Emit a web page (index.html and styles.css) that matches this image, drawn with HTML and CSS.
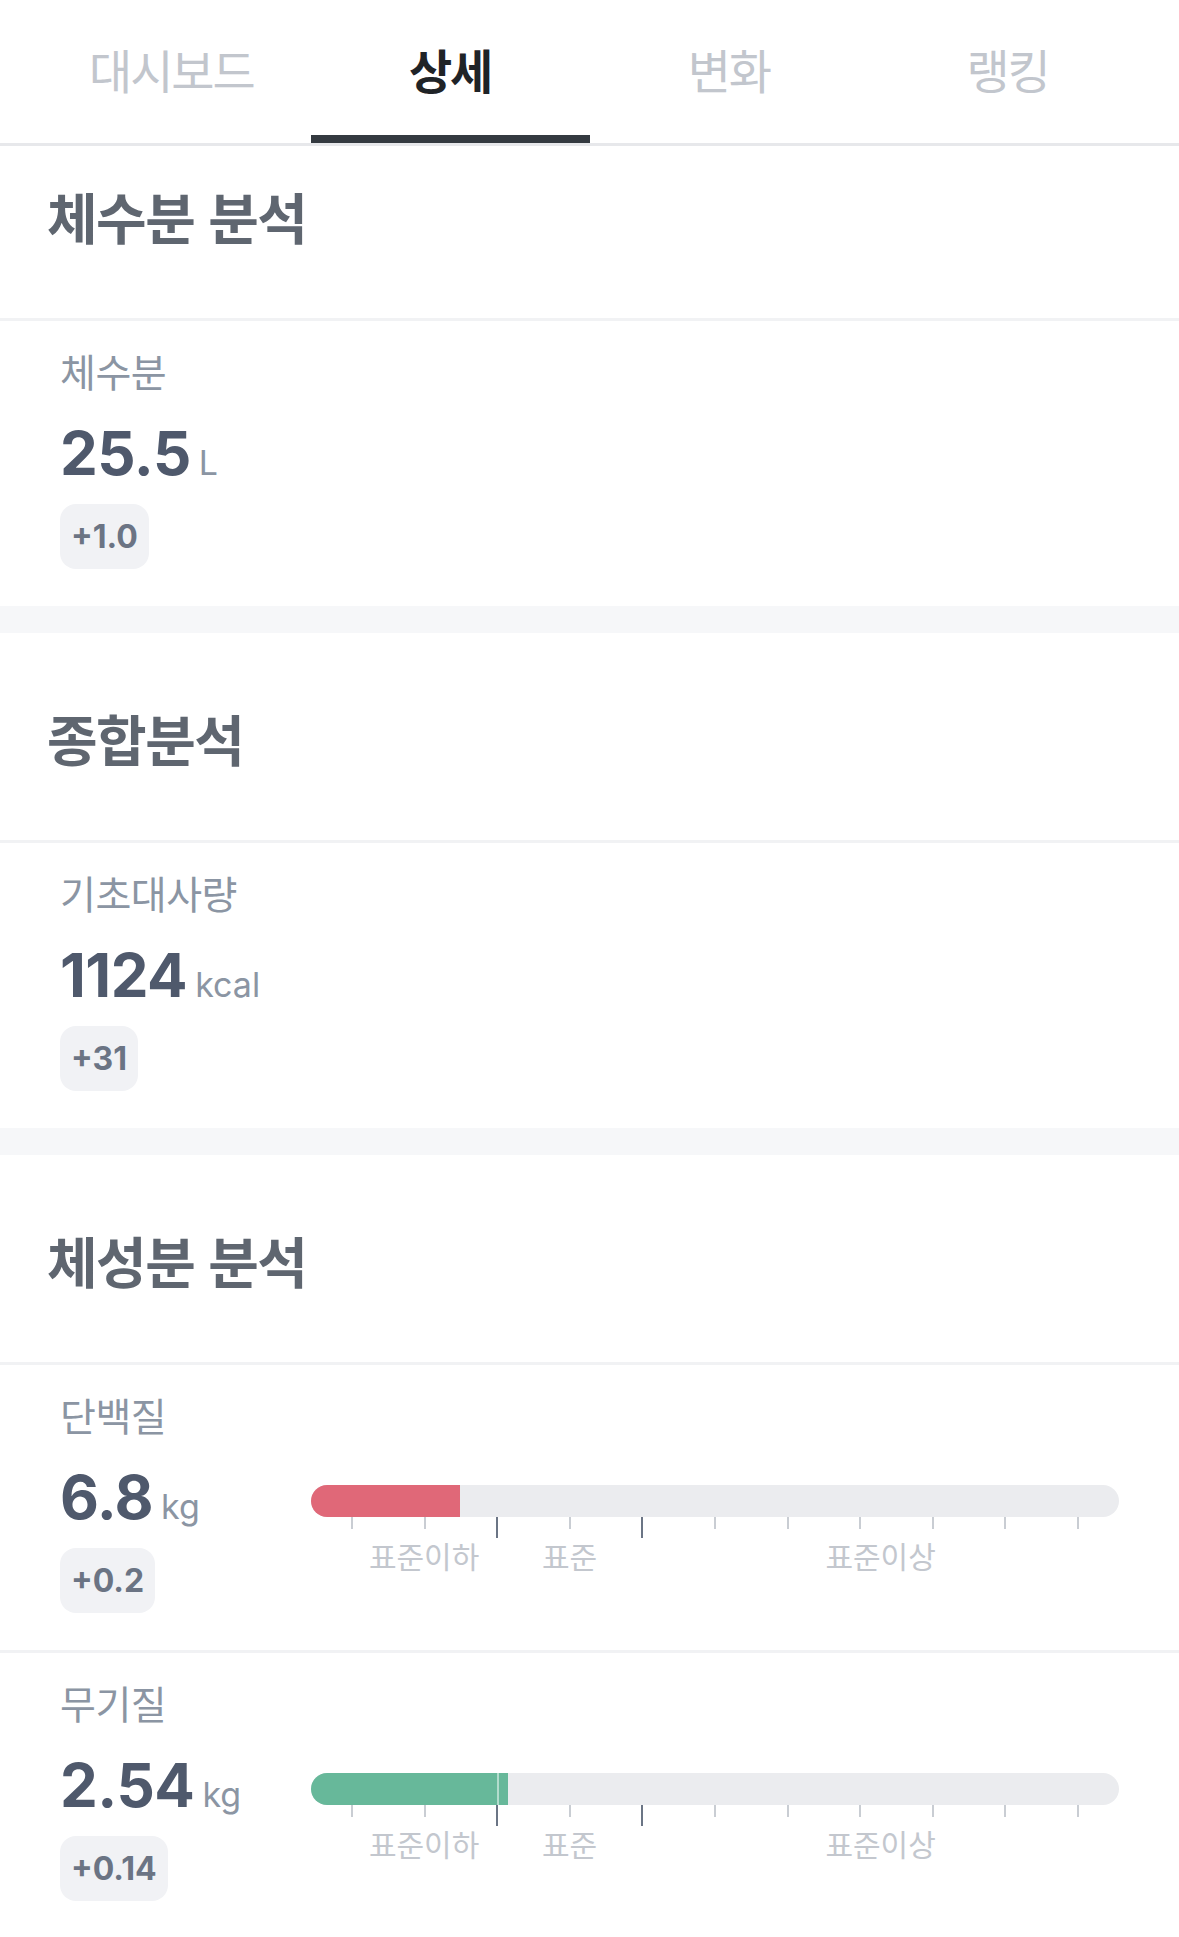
FILE: index.html
```html
<!DOCTYPE html>
<html lang="ko">
<head>
  <meta charset="UTF-8" />
  <title>상세 분석</title>
  <link rel="stylesheet" href="styles.css">
</head>
<body>

  <nav class="tabs">
    <button class="tab">대시보드</button>
    <button class="tab active">상세</button>
    <button class="tab">변화</button>
    <button class="tab">랭킹</button>
  </nav>

  <!-- 체수분 -->
  <section class="section first">
    <h2 class="section-title">체수분 분석</h2>
    <div class="metric">
      <div class="metric-info">
        <div class="metric-label">체수분</div>
        <div class="metric-value">25.5<span class="unit">L</span></div>
        <span class="delta">+1.0</span>
      </div>
    </div>
  </section>

  <!-- 종합 -->
  <section class="section">
    <h2 class="section-title">종합분석</h2>
    <div class="metric">
      <div class="metric-info">
        <div class="metric-label">기초대사량</div>
        <div class="metric-value">1124<span class="unit">kcal</span></div>
        <span class="delta">+31</span>
      </div>
    </div>
  </section>

  <!-- 체성분 -->
  <section class="section">
    <h2 class="section-title">체성분 분석</h2>

    <div class="metric with-meter">
      <div class="metric-info">
        <div class="metric-label">단백질</div>
        <div class="metric-value">6.8<span class="unit">kg</span></div>
        <span class="delta">+0.2</span>
      </div>
      <div class="meter">
        <div class="track">
          <div class="fill low" style="width: 18.4%"></div>
        </div>
        <div class="ticks">
          <i></i><i></i><i class="major"></i><i></i><i class="major"></i><i></i><i></i><i></i><i></i><i></i><i></i>
        </div>
        <div class="scale-labels">
          <span class="lbl-low">표준이하</span>
          <span class="lbl-mid">표준</span>
          <span class="lbl-high">표준이상</span>
        </div>
      </div>
    </div>

    <div class="metric with-meter">
      <div class="metric-info">
        <div class="metric-label">무기질</div>
        <div class="metric-value">2.54<span class="unit">kg</span></div>
        <span class="delta">+0.14</span>
      </div>
      <div class="meter">
        <div class="track">
          <div class="fill normal" style="width: 24.4%"></div>
          <span class="split"></span>
        </div>
        <div class="ticks">
          <i></i><i></i><i class="major"></i><i></i><i class="major"></i><i></i><i></i><i></i><i></i><i></i><i></i>
        </div>
        <div class="scale-labels">
          <span class="lbl-low">표준이하</span>
          <span class="lbl-mid">표준</span>
          <span class="lbl-high">표준이상</span>
        </div>
      </div>
    </div>
  </section>

</body>
</html>
```

FILE: styles.css
```css
body {
  margin: 0;
  background: #fff;
  font-family: Inter, "Noto Sans CJK KR", sans-serif;
  color: #4f596c;
}

/* tabs */
.tabs {
  display: flex;
  padding: 0 32px;
  border-bottom: 3px solid #e7e8eb;
}
.tab {
  flex: 1;
  height: 143px;
  padding: 0 0 7px;
  background: none;
  border: none;
  font-family: "Noto Sans CJK KR", sans-serif;
  font-size: 47px;
  letter-spacing: -2px;
  color: #c2c6cd;
  cursor: pointer;
}
.tab.active {
  color: #1f2327;
  font-weight: 700;
  box-shadow: inset 0 -8px 0 #343a40;
}

/* sections */
.section + .section {
  border-top: 27px solid #f6f7f9;
}
.section-title {
  margin: 0;
  padding: 74px 47px 73px;
  font-family: "Noto Sans CJK KR", sans-serif;
  font-size: 55px;
  line-height: 60px;
  letter-spacing: -1.5px;
  font-weight: 700;
  color: #5f6670;
  border-bottom: 3px solid #f1f2f4;
}
.section.first .section-title {
  padding-top: 39px;
}

/* metric rows */
.metric {
  padding: 22px 60px 37px;
}
.metric + .metric {
  border-top: 3px solid #f1f2f4;
}
.metric.with-meter {
  display: grid;
  grid-template-columns: 251px 1fr;
}
.metric-info {
  display: flex;
  flex-direction: column;
  align-items: flex-start;
}
.metric-label {
  font-family: "Noto Sans CJK KR", sans-serif;
  font-size: 39px;
  line-height: 54px;
  letter-spacing: -0.5px;
  color: #8b95a3;
}
.metric-value {
  margin-top: 24px;
  font-size: 60px;
  line-height: 64px;
  font-weight: 700;
  letter-spacing: -0.5px;
  color: #4f596c;
}
.unit {
  margin-left: 8px;
  font-size: 34px;
  line-height: 1;
  font-weight: 400;
  letter-spacing: 0;
  color: #8b95a3;
}
.delta {
  display: flex;
  align-items: center;
  height: 65px;
  margin-top: 19px;
  padding: 0 11px;
  border-radius: 16px;
  background: #f1f2f5;
  color: #6b7484;
  font-size: 32px;
  font-weight: 700;
}

/* meter */
.meter {
  margin-top: 98px;
}
.track {
  position: relative;
  height: 32px;
  border-radius: 16px;
  background: #ebecef;
  overflow: hidden;
}
.fill {
  height: 100%;
}
.fill.low {
  background: #e06878;
}
.fill.normal {
  background: #67b89a;
}
.split {
  position: absolute;
  top: 0;
  bottom: 0;
  left: 23%;
  width: 2px;
  background: rgba(255, 255, 255, 0.5);
}
.ticks {
  display: flex;
  justify-content: space-between;
  align-items: flex-start;
  height: 21px;
  padding: 0 40px;
}
.ticks i {
  width: 2px;
  height: 12px;
  background: #c9cdd3;
}
.ticks i.major {
  height: 21px;
  background: #6b7585;
}
.scale-labels {
  position: relative;
  height: 36px;
  margin-top: -1px;
  font-family: "Noto Sans CJK KR", sans-serif;
  font-size: 30px;
  line-height: 36px;
  letter-spacing: 0;
  color: #c3c7ce;
}
.scale-labels span {
  position: absolute;
  top: 0;
  transform: translateX(-50%);
  white-space: nowrap;
}
.lbl-low {
  left: 14%;
}
.lbl-mid {
  left: 32%;
}
.lbl-high {
  left: 70.5%;
}
```
